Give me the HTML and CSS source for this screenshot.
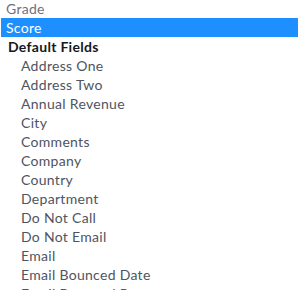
FILE: index.html
```html
<!DOCTYPE html>
<html lang="en">
<head>
  <meta charset="UTF-8" />
  <title>Field list</title>
  <link rel="stylesheet" href="styles.css">
</head>
<body>
  <ul class="options">
    <li class="option muted">Grade</li>
    <li class="option selected">Score</li>
    <li class="group">Default Fields</li>
    <li class="option sub">Address One</li>
    <li class="option sub">Address Two</li>
    <li class="option sub">Annual Revenue</li>
    <li class="option sub">City</li>
    <li class="option sub">Comments</li>
    <li class="option sub">Company</li>
    <li class="option sub">Country</li>
    <li class="option sub">Department</li>
    <li class="option sub">Do Not Call</li>
    <li class="option sub">Do Not Email</li>
    <li class="option sub">Email</li>
    <li class="option sub">Email Bounced Date</li>
    <li class="option sub">Email Bounced Reason</li>
  </ul>
</body>
</html>
```

FILE: styles.css
```css
body {
  margin: 0;
  background: #fff;
  font-family: Lato, "Noto Sans", sans-serif;
  font-size: 14px;
  letter-spacing: 0.3px;
  overflow: hidden;
}

.options {
  list-style: none;
  margin: -1px 0 0 0;
  padding: 0;
}

.options li {
  height: 19px;
  line-height: 19px;
  white-space: nowrap;
}

.option {
  padding-left: 6px;
  color: #4e5462;
}

.option.muted {
  color: #6e7180;
}

.option.selected {
  background: #1e8fff;
  color: #fff;
  margin-left: 1px;
  padding-left: 5px;
}

.group {
  padding-left: 8px;
  font-weight: bold;
  color: #16181c;
}

.option.sub {
  padding-left: 21px;
}
```
